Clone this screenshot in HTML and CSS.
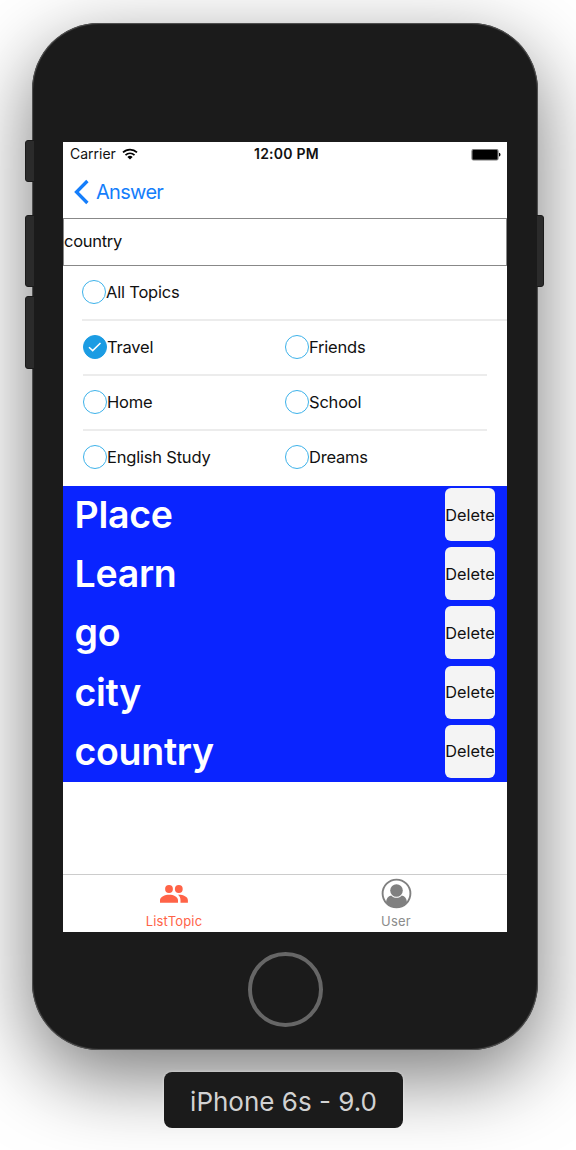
FILE: index.html
```html
<!DOCTYPE html>
<html lang="en">
<head>
<meta charset="utf-8">
<title>iPhone 6s - 9.0</title>
<link rel="stylesheet" href="styles.css">
</head>
<body>
<main class="device">
  <i class="key key-mute"></i><i class="key key-up"></i><i class="key key-down"></i><i class="key key-power"></i>
  <div class="screen">
    <header class="status">
      <span class="carrier"><span>Carrier</span>
        <svg width="16" height="12" viewBox="0 0 16 12"><g fill="none" stroke="#000" stroke-width="1.7"><path d="M1 4.400a10 10 0 0 1 14 0"/><path d="M3.500 7.100a6.400 6.400 0 0 1 9 0"/></g><path d="M5.400 8.900a3.800 3.800 0 0 1 5.200 0L8 11.600z"/></svg>
      </span>
      <span class="clock">12:00 PM</span>
      <svg class="battery" width="30" height="13" viewBox="0 0 30 13"><rect x="1" y="1.500" width="26" height="10.500" rx="1.500" fill="#000" stroke="#777" stroke-width="1.200"/><path d="M28 4.800c2 .5 2 3.300 0 3.800z"/></svg>
    </header>
    <nav class="nav">
      <svg width="16" height="26" viewBox="0 0 16 26"><path d="M14.400 2 3.500 13l10.900 11" fill="none" stroke="#157efb" stroke-width="3.300"/></svg>
      <span>Answer</span>
    </nav>
    <div class="field"><span>country</span></div>
    <section class="topics">
      <div class="row row-all"><span class="option"><i class="radio"></i><span>All Topics</span></span></div>
      <div class="row"><span class="option"><i class="radio on"><svg width="14" height="10" viewBox="0 0 14 10"><path d="M1 5.300 4.700 8.600 12.500 1" fill="none" stroke="#fff" stroke-width="1.500"/></svg></i><span>Travel</span></span><span class="option"><i class="radio"></i><span>Friends</span></span></div>
      <div class="row"><span class="option"><i class="radio"></i><span>Home</span></span><span class="option"><i class="radio"></i><span>School</span></span></div>
      <div class="row row-last"><span class="option"><i class="radio"></i><span>English Study</span></span><span class="option"><i class="radio"></i><span>Dreams</span></span></div>
    </section>
    <section class="words">
      <div class="word"><span>Place</span><button>Delete</button></div>
      <div class="word"><span>Learn</span><button>Delete</button></div>
      <div class="word"><span>go</span><button>Delete</button></div>
      <div class="word"><span>city</span><button>Delete</button></div>
      <div class="word"><span>country</span><button>Delete</button></div>
    </section>
    <footer class="tabs">
      <div class="tab active">
        <svg width="28" height="31" viewBox="0 0 28 31" fill="#ff6347"><circle cx="9" cy="11" r="3.900"/><circle cx="18.800" cy="11" r="3.900"/><path d="M0 24.700v-2.500C0 18.700 5 16.700 9.200 16.700s8.800 2 8.800 5.500v2.500zM18 16.800c4.500-.3 9.900 1.700 9.900 5.400v2.500h-7.400v-2.500c0-2.500-1-4.100-2.500-5.400z"/></svg>
        <span>ListTopic</span>
      </div>
      <div class="tab">
        <svg width="31" height="31" viewBox="0 0 31 31"><circle cx="15.500" cy="15.500" r="13.900" fill="#fff" stroke="#808080" stroke-width="1.900"/><path d="M5 24.400c.3-4.200 2-6.400 5.200-7 1.300 1.500 3 2.300 5.300 2.300s4-.8 5.300-2.300c3.200.6 4.900 2.800 5.200 7a13.900 13.900 0 0 1-21 0z" fill="#808080"/><circle cx="15.500" cy="12.500" r="6.300" fill="#808080"/></svg>
        <span>User</span>
      </div>
    </footer>
  </div>
  <div class="home"></div>
</main>
<div class="caption"><span>iPhone 6s - 9.0</span></div>
</body>
</html>
```
FILE: styles.css
```css
* { box-sizing: border-box; }
body { margin: 0; width: 576px; height: 1150px; overflow: hidden; background: #fff; font-family: Inter, Roboto, sans-serif; color: #111; display: flex; flex-direction: column; align-items: flex-start; }
span { white-space: nowrap; }
svg { display: block; flex: none; }
.device { position: relative; flex: none; width: 506px; height: 1027px; margin: 23px 0 0 32px; padding: 119px 31px 0; border-radius: 67px; background: #1b1b1b; box-shadow: inset 0 0 1px 1px #555, 0 26px 80px rgba(0,0,0,.53); display: flex; flex-direction: column; align-items: center; }
.key { position: absolute; width: 10px; background: #2b2b2b; border: 1px solid #1b1b1b; border-radius: 3px 0 0 3px; left: -7px; }
.key-mute { top: 117px; height: 42px; }
.key-up { top: 192px; height: 72px; }
.key-down { top: 273px; height: 73px; }
.key-power { top: 192px; height: 72px; left: auto; right: -6px; width: 8px; border-radius: 0 3px 3px 0; }
.screen { flex: none; width: 444px; height: 790px; background: #fff; display: flex; flex-direction: column; }
.status { height: 24px; display: grid; grid-template-columns: 1fr auto 1fr; align-items: center; padding: 0 6px 0 7px; font-size: 14px; line-height: 16px; }
.carrier { display: flex; align-items: center; gap: 6px; }
.clock { font-weight: 600; letter-spacing: .25px; padding-left: 2px; }
.battery { justify-self: end; }
.nav { height: 51.500px; display: flex; align-items: center; gap: 7px; padding: 1px 0 0 10px; color: #157efb; font-size: 20px; letter-spacing: -.7px; }
.field { height: 48px; border: 1.500px solid #888; display: flex; align-items: center; font-size: 16.500px; letter-spacing: -.3px; padding: 0 0 2px; }
.topics { height: 220px; font-size: 16.500px; letter-spacing: -.2px; }
.row { height: 55px; margin: 0 20px; border-bottom: 2px solid #ececec; display: grid; grid-template-columns: 202px 1fr; align-items: center; }
.row-all { margin: 0 0 0 19px; }
.row-last { border-color: #fff; }
.option { display: flex; align-items: center; }
.radio { width: 24px; height: 24px; flex: none; border: 1.500px solid #3db2ea; border-radius: 50%; display: flex; align-items: center; justify-content: center; }
.radio.on { background: #1b9ce3; border-color: #1b9ce3; }
.words { height: 296px; background: #0a24ff; }
.word { height: 59.200px; display: flex; align-items: center; justify-content: space-between; padding: 0 12px 1px 11.500px; color: #fff; font-size: 37.500px; font-weight: 640; letter-spacing: -.3px; }
.word button { width: 50px; height: 53px; padding: 0; border: 0; border-radius: 6px; background: #f4f4f4; color: #111; font: 16.300px Inter, Roboto, sans-serif; display: flex; justify-content: center; align-items: center; white-space: nowrap; }
.tabs { margin-top: auto; height: 58px; border-top: 1px solid #ccc; display: grid; grid-template-columns: 1fr 1fr; }
.tab { display: flex; flex-direction: column; align-items: center; padding-top: 3px; gap: 4px; font-size: 13px; line-height: 16px; letter-spacing: .2px; color: #8b8b8b; }
.tab.active { color: #ff6347; }
.home { flex: none; width: 75px; height: 75px; margin-top: 20px; border: 4px solid #666; border-radius: 50%; }
.caption { position: relative; flex: none; width: 239px; height: 56px; margin: 22px 0 0 164px; border-radius: 8px; background: #1b1b1b; box-shadow: 0 0 3px rgba(255,255,255,.5); color: #d2d2d2; font-size: 26px; display: flex; align-items: center; justify-content: center; padding-top: 2px; }
```
